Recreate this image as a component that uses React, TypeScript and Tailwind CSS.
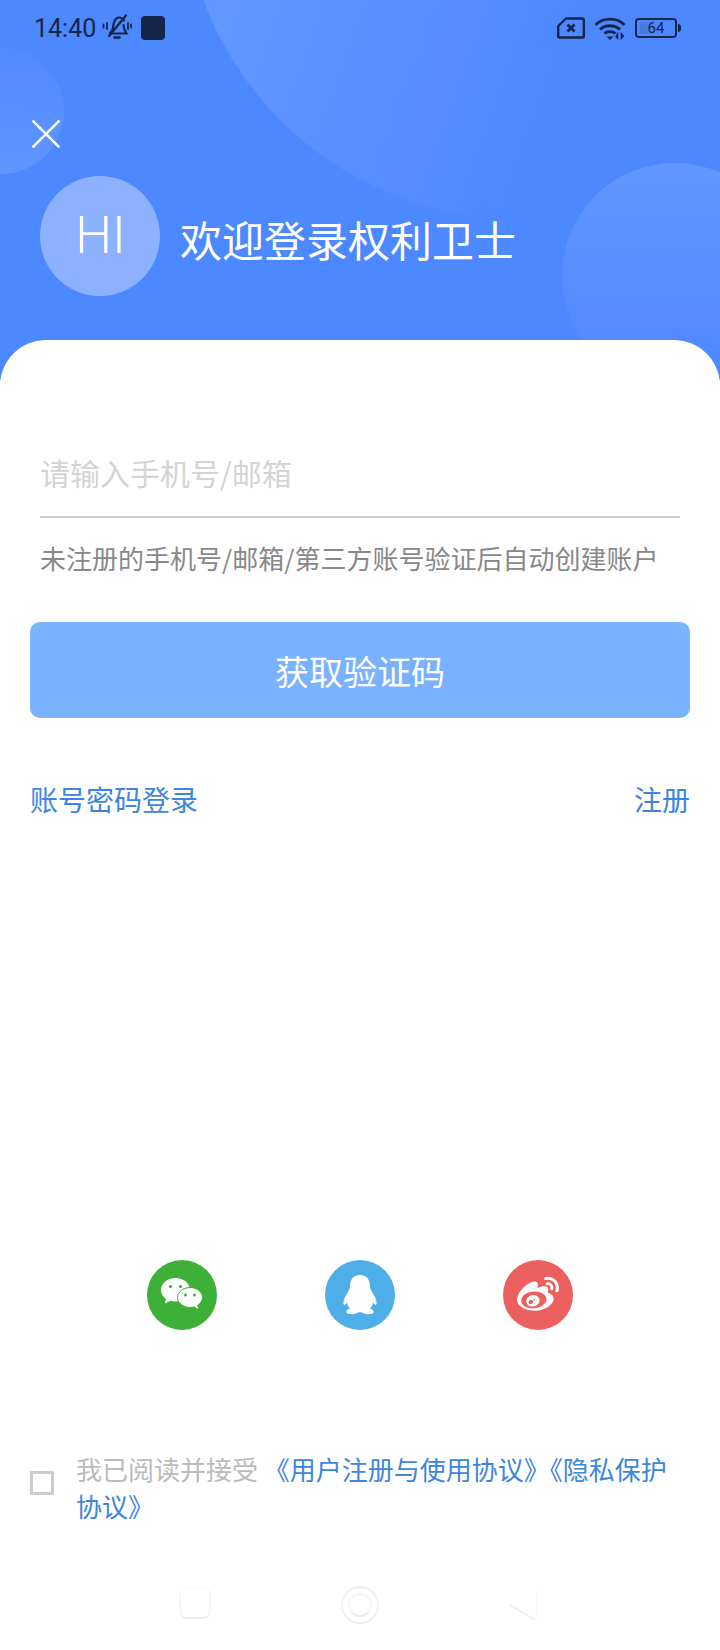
import React from 'react';
import { FaWeibo } from 'react-icons/fa';

const cjk = { fontFamily: '"Noto Sans CJK SC", "Noto Sans", sans-serif' };

const BellOff = () => (
  <svg width="30" height="28" viewBox="0 0 30 28" fill="none" stroke="#16264a" strokeWidth="2.200" strokeLinecap="round">
    <path d="M8 19c3-2 3-5 3.500-8.500C12 6.500 14.500 3.500 17 3.500c2.200 0 3.800 1 5 3" />
    <path d="M21.500 11c.3 3.500 1 6 3 8.500H8.500" />
    <path d="M12.500 23.500h5" strokeWidth="2.600" />
    <path d="M7 22 24 1.500" />
    <path d="M5 9v6M1.500 10.500v3M26 9v6M29 10.500v3" strokeWidth="1.800" />
  </svg>
);

const SimOff = () => (
  <svg width="28" height="22" viewBox="0 0 28 22" fill="none" stroke="#16264a" strokeWidth="2.400">
    <path d="M9 1.500h16.500A1.300 1.300 0 0 1 26.800 2.800v16.400a1.300 1.300 0 0 1-1.300 1.300H2.500a1.300 1.300 0 0 1-1.300-1.300V9z" strokeLinejoin="round" />
    <path d="M10.500 7.500l7 7M17.500 7.500l-7 7" strokeWidth="2.600" />
  </svg>
);

const Wifi = () => (
  <svg width="32" height="24" viewBox="0 0 32 24" fill="none" stroke="#16264a" strokeWidth="2.800">
    <path d="M1.500 9c7.500-7.800 21.500-7.800 29 0" />
    <path d="M6 13.500c5.500-5 14.500-5 20 0" />
    <path d="M10.500 17.500c3-2.500 8-2.500 11 0" />
    <path d="M12.500 20.500h7L16 24z" fill="#16264a" stroke="none" />
    <path d="M24 16.500v7L21.500 20.500zM27 16.500v7l3-3.500z" fill="#16264a" stroke="#16264a" strokeWidth="0.600" />
  </svg>
);

const Battery = () => (
  <div className="flex items-center gap-[1px]">
    <div className="relative w-[42px] h-[20px] rounded-[4px] border-2 border-[#16264a] flex items-center justify-center overflow-hidden">
      <div className="absolute left-[3px] top-[2px] bottom-[2px] w-[22px] rounded-[2px] bg-gradient-to-r from-[#3f77dd] to-[#4c88ff]" />
      <span className="relative text-[15px] leading-none text-[#16264a] font-['Roboto']">64</span>
    </div>
    <div className="w-[3px] h-[8px] rounded-r-sm bg-[#16264a]" />
  </div>
);

const WeChatGlyph = () => (
  <svg width="44" height="36" viewBox="0 0 44 36">
    <path d="M15.500 1C7.500 1 1 6.500 1 13c0 3.700 2 6.800 5 9L4.800 26.500 10.500 23.800c1.600.5 3.300.7 5 .7 7.800 0 14.500-5 14.500-11.500S23.500 1 15.500 1z" fill="#fff" />
    <circle cx="10.500" cy="9.500" r="1.600" fill="#3fb037" />
    <circle cx="20.500" cy="9.500" r="1.600" fill="#3fb037" />
    <path d="M30 10.500c-6.800 0-12.500 4.500-12.500 10S23.200 30.500 30 30.500c1.400 0 2.700-.2 4-.6l5 3-1.400-4.600c2.900-1.800 4.900-4.600 4.900-7.800 0-5.500-5.700-10-12.500-10z" fill="#fff" stroke="#3fb037" strokeWidth="1" />
    <circle cx="25.500" cy="18" r="1.500" fill="#3fb037" />
    <circle cx="34.500" cy="18" r="1.500" fill="#3fb037" />
  </svg>
);

const QqGlyph = () => (
  <svg width="34" height="40" viewBox="0 0 34 40" fill="#fff">
    <path d="M17 0C10 0 7 5 7 11c0 2-.5 3-1.500 5C3 20 0 25 .5 29c.5 2 2 .5 3-1.500C4.500 30 5.500 32 7 33.500c-3 1-4 2.500-3.500 4 1 2 6.500 2 9.500 1 2-.7 3-1.500 4-1.500s2 .8 4 1.500c3 1 8.500 1 9.500-1 .5-1.500-.5-3-3.500-4 1.500-1.500 2.500-3.500 3.500-6 1 2 2.500 3.500 3 1.500.5-4-2.500-9-5-13-1-2-1.500-3-1.500-5C27 5 24 0 17 0z" />
  </svg>
);

export default function App() {
  return (
    <div className="relative w-[720px] h-[1650px] overflow-hidden bg-white" style={cjk}>
      {/* blue header with the soft circles behind it */}
      <header className="relative h-[380px] bg-[#4c88ff] overflow-hidden">
        <div className="absolute left-[183px] top-[-448px] w-[666px] h-[666px] rounded-full bg-[linear-gradient(110deg,#6498ff_20%,#4c88ff_62%)]" />
        <div className="absolute left-[562px] top-[163px] w-[226px] h-[226px] rounded-full bg-gradient-to-b from-[#6296ff] to-[#4c88ff]" />
        <div className="absolute left-[-62px] top-[48px] w-[126px] h-[126px] rounded-full bg-gradient-to-b from-[#4f8aff] to-[#6095ff]" />

        <div className="relative flex items-center justify-between h-[56px] pl-[34px] pr-[39px]">
          <div className="flex items-center gap-[6px]">
            <span className="text-[25px] leading-none text-[#16264a] font-['Roboto']">14:40</span>
            <BellOff />
            <div className="ml-[3px] w-[24px] h-[24px] rounded-[4px] bg-[#16264a]" />
          </div>
          <div className="flex items-center gap-[9px]">
            <SimOff />
            <Wifi />
            <Battery />
          </div>
        </div>

        <div className="relative mt-[64px] ml-[32px]">
          <svg width="28" height="28" viewBox="0 0 28 28" stroke="#fff" strokeWidth="2.500">
            <path d="M0.500 0.500l27 27M27.500 0.500l-27 27" />
          </svg>
        </div>

        <div className="relative mt-[28px] ml-[40px] flex items-center gap-[20px]">
          <div className="w-[120px] h-[120px] pl-[1px] rounded-full bg-[#8cb2ff] flex items-center justify-center">
            <span className="text-[52px] leading-none text-white font-light font-['Roboto']">HI</span>
          </div>
          <h1 className="mt-[6px] text-[42px] leading-none font-normal text-white">欢迎登录权利卫士</h1>
        </div>
      </header>

      {/* white sheet that overlaps the header */}
      <main className="absolute left-0 right-0 top-[340px] h-[1310px] bg-white rounded-t-[46px] flex flex-col">
        <div className="mt-[108px] mx-[40px] h-[70px] border-b-2 border-[#cccccc]">
          <div className="text-[30px] leading-[48px] text-[#d4d4d4]">请输入手机号/邮箱</div>
        </div>
        <p className="mt-[22px] mx-[40px] text-[26px] leading-[36px] text-[#888888] whitespace-nowrap">未注册的手机号/邮箱/第三方账号验证后自动创建账户</p>

        <button className="mt-[46px] mx-[30px] h-[96px] rounded-[10px] bg-[#7ab2ff] text-[34px] text-white">获取验证码</button>

        <div className="mt-[59px] mx-[30px] flex justify-between text-[28px] leading-[44px] text-[#3d85e0]">
          <span>账号密码登录</span>
          <span>注册</span>
        </div>

        <div className="mt-[439px] flex justify-center gap-[108px]">
          <div className="w-[70px] h-[70px] rounded-full bg-[#3fb037] flex items-center justify-center">
            <WeChatGlyph />
          </div>
          <div className="w-[70px] h-[70px] rounded-full bg-[#4eaee8] flex items-center justify-center">
            <QqGlyph />
          </div>
          <div className="w-[70px] h-[70px] rounded-full bg-[#eb5f5f] flex items-center justify-center text-white">
            <FaWeibo size={42} />
          </div>
        </div>

        <div className="mt-[120px] ml-[30px] mr-[48px] flex items-start gap-[22px]">
          <div className="mt-[21px] w-[24px] h-[24px] shrink-0 border-[3px] border-[#cccccc]" />
          <p className="text-[26px] leading-[37px] text-[#bbbbbb]">
            我已阅读并接受 <span className="text-[#3d85e0]">《用户注册与使用协议》《隐私保护协议》</span>
          </p>
        </div>

        {/* navigation keys */}
        <div className="absolute left-0 right-0 top-[1246px] h-[36px]">
          <div className="absolute left-[181px] top-[2px] w-[28px] h-[29px] rounded-[5px] bg-white shadow-[0_1px_3px_rgba(0,0,0,0.14)]" />
          <div className="absolute left-[341px] top-0 w-[38px] h-[38px] rounded-full border-2 border-[#f0f0f0] flex items-center justify-center">
            <div className="w-[24px] h-[24px] rounded-full border-2 border-[#f7f7f7] border-b-[#ebebeb]" />
          </div>
          <svg className="absolute left-[508px] top-[3px]" width="32" height="32" viewBox="0 0 32 32" fill="none">
            <path d="M2 16 27 31" stroke="#eeeeee" strokeWidth="2" />
            <path d="M28.500 0v30" stroke="#f6f6f6" strokeWidth="1" />
          </svg>
        </div>
      </main>
    </div>
  );
}
